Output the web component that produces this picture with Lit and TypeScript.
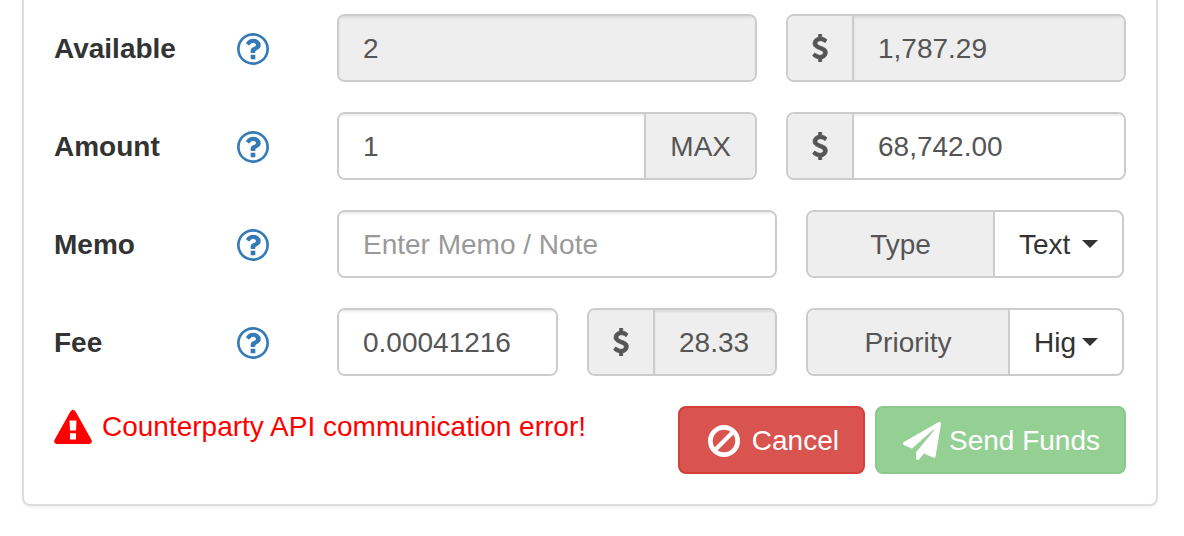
import { LitElement, html, css, svg } from "lit";
import { customElement, property } from "lit/decorators.js";

// Each glyph carries its own view box.
const ICONS: Record<string, { box: string; body: unknown }> = {
  question: {
    box: "0 0 1536 1536",
    body: svg`<path d="M880 1072v160q0 14-9 23t-23 9h-160q-14 0-23-9t-9-23v-160q0-14 9-23t23-9h160q14 0 23 9t9 23zm256-496q0 50-15 90t-45.500 69-52 44-59.500 36q-32 18-46.500 28t-26 24-11.500 29v32q0 14-9 23t-23 9h-160q-14 0-23-9t-9-23v-68q0-35 10.500-64.500t24-47.500 39-35.500 41-25.500 44.500-21q53-25 75-43t22-49q0-42-43.500-71.500t-95.500-29.500q-56 0-95 27-29 20-80 83-9 12-25 12-11 0-19-6l-108-82q-10-7-12-20t5-23q122-192 349-192 129 0 238.500 89.500t109.500 214.500zm-368-448q-130 0-248.500 51t-204 136.500-136.500 204-51 248.500 51 248.500 136.500 204 204 136.500 248.500 51 248.500-51 204-136.500 136.500-204 51-248.500-51-248.500-136.500-204-204-136.500-248.500-51zm768 640q0 209-103 385.500t-279.500 279.500-385.500 103-385.500-103-279.500-279.500-103-385.500 103-385.500 279.500-279.500 385.500-103 385.500 103 279.500 279.500 103 385.500z"/>`,
  },
  warning: {
    box: "0 0 576 512",
    body: svg`<path fill-rule="evenodd" d="M329 24l240 430c14 26-4 58-32 58H39c-28 0-46-32-32-58L247 24c18-32 64-32 82 0zM236 156l6 152h92l6-152zM242 352h92v92h-92z"/>`,
  },
  dollar: {
    box: "0 0 1024 1792",
    body: svg`<path stroke="currentColor" stroke-width="50" d="M978 1185q0 153-99.500 263.500t-258.500 136.500v175q0 14-9 23t-23 9h-135q-13 0-22.500-9.500t-9.500-22.500v-175q-66-9-127.500-31t-101.500-44.500-74-48-46.500-37.500-17.500-18q-17-21-2-41l103-135q7-10 23-12 15-2 24 9l2 2q113 99 243 125 37 8 74 8 81 0 142.500-43t61.500-122q0-28-15-53t-33.500-42-58.500-37.500-66-32-80-32.500q-39-16-61.500-25t-61.500-26.500-62.500-31-56.500-35.500-53.500-42.500-43.500-49-35.500-58-21-66.500-8.500-78q0-138 98-242t255-134v-180q0-13 9.500-22.500t22.500-9.500h135q14 0 23 9t9 23v176q57 6 110.500 23t87 33.500 63.500 37.500 39 29 15 14q17 18 5 38l-81 146q-8 15-23 16-14 3-27-7-3-3-14.500-12t-39-26.500-58.500-32-74.500-26-85.500-11.500q-95 0-155 43t-60 111q0 26 8.500 48t29.500 41.500 39.500 33 56 31 60.500 27 70 27.500q53 20 81 31.500t76 35 75.500 42.500 62 50 53 63.500 31.500 76.500 13 94z"/>`,
  },
  ban: {
    box: "0 0 512 512",
    body: svg`<circle cx="256" cy="256" r="218" fill="none" stroke="currentColor" stroke-width="76"/>
      <path d="M112 400L400 112" fill="none" stroke="currentColor" stroke-width="68"/>`,
  },
  plane: {
    box: "0 0 512 512",
    body: svg`<path d="M476 3.200L12.500 270.600c-18.100 10.400-15.800 35.600 2.200 43.200L121 358.400l287.300-253.200c5.500-4.900 13.300 2.600 8.600 8.300L176 407v80.500c0 23.600 28.500 32.900 42.500 15.800L282 426l124.600 52.200c14.200 6 30.400-2.900 33-18.200l72-432C515 7.800 493.300-6.800 476 3.200z"/>`,
  },
};

@customElement("app-icon")
class AppIcon extends LitElement {
  @property() name = "question";

  static styles = css`
    :host { display: inline-flex; }
    .glyph { display: block; width: 100%; height: 100%; fill: currentColor; }
  `;

  render() {
    const icon = ICONS[this.name];
    return html`<svg class="glyph" viewBox=${icon.box} aria-hidden="true">${icon.body}</svg>`;
  }
}

@customElement("app-root")
class AppRoot extends LitElement {
  static styles = css`
    :host {
      display: block;
      font: 28px/40px "Liberation Sans", Arial, sans-serif;
      color: #333;
      background: #fff;
    }
    * { box-sizing: border-box; }
    .page { padding: 0 26px 30px 22px; }
    .panel {
      display: grid;
      gap: 30px;
      padding: 14px 30px 30px;
      border: 2px solid #ddd;
      border-top: 0;
      border-radius: 0 0 8px 8px;
      box-shadow: 0 2px 2px rgba(0, 0, 0, 0.05);
    }
    .row { display: grid; grid-template-columns: 183px 100px minmax(0, 1fr); align-items: center; }
    .name { padding-top: 2px; font-weight: 700; }
    .help { display: flex; width: 32px; padding-top: 2px; color: #337ab7; }
    .help app-icon { width: 32px; height: 32px; }
    .fields { display: grid; gap: 29px; }
    .pair { grid-template-columns: minmax(0, 420fr) minmax(0, 340fr); }
    .memo { grid-template-columns: minmax(0, 440fr) minmax(0, 318fr); padding-right: 2px; }
    .fee { grid-template-columns: minmax(0, 221fr) minmax(0, 190fr) minmax(0, 318fr); padding-right: 2px; }
    .group {
      display: flex;
      height: 68px;
      border: 2px solid #ccc;
      border-radius: 8px;
      overflow: hidden;
      background: #fff;
    }
    .input {
      flex: 1;
      min-width: 0;
      width: 100%;
      padding: 2px 24px 0;
      border: 0;
      outline: 0;
      font: inherit;
      color: #555;
      background: #fff;
      box-shadow: inset 0 2px 2px rgba(0, 0, 0, 0.075);
    }
    .input::placeholder { color: #999; opacity: 1; }
    .input:read-only { background: #eee; }
    .addon {
      display: flex;
      flex: none;
      align-items: center;
      justify-content: center;
      padding: 2px 24px 0;
      border: 0;
      border-right: 2px solid #ccc;
      font: inherit;
      color: #555;
      background: #eee;
    }
    .currency { width: 66px; padding: 0; }
    .currency app-icon { width: 16px; height: 28px; }
    .max { border-right: 0; border-left: 2px solid #ccc; }
    .wide { flex: 1; }
    .choice { position: relative; display: flex; align-items: center; width: 127px; }
    .narrow { width: 112px; }
    .select {
      width: 100%;
      height: 100%;
      padding: 2px 46px 0 24px;
      border: 0;
      outline: 0;
      appearance: none;
      font: inherit;
      color: #333;
      background: transparent;
      text-overflow: clip;
    }
    .caret {
      position: absolute;
      right: 24px;
      top: 28px;
      border: 8px solid transparent;
      border-top-color: #333;
      border-bottom: 0;
      pointer-events: none;
    }
    .footer { display: flex; justify-content: space-between; }
    .alert { display: flex; align-items: center; gap: 10px; height: 40px; padding-top: 2px; color: #f00; }
    .alert app-icon { width: 38px; height: 34px; }
    .actions { display: flex; gap: 10px; }
    .button {
      display: flex;
      align-items: center;
      height: 68px;
      padding: 2px 24px 0 26px;
      border: 2px solid;
      border-radius: 8px;
      font: inherit;
      color: #fff;
    }
    .cancel { gap: 12px; padding-left: 28px; background: #d9534f; border-color: #d43f3a; }
    .cancel app-icon { width: 32px; height: 32px; }
    .send { gap: 8px; background: #5cb85c; border-color: #4cae4c; opacity: 0.65; }
    .send app-icon { width: 38px; height: 38px; }
  `;

  private row(id: string, label: string, kind: string, fields: unknown) {
    return html`<div class="row">
      <label class="name" for=${id}>${label}</label>
      <a class="help" href="#" aria-label="${label} help"><app-icon name="question"></app-icon></a>
      <div class="fields ${kind}">${fields}</div>
    </div>`;
  }

  private money(label: string, value: string, readonly = false) {
    return html`<div class="group">
      <span class="addon currency"><app-icon name="dollar"></app-icon></span>
      <input class="input" aria-label=${label} .value=${value} ?readonly=${readonly} />
    </div>`;
  }

  render() {
    return html`<div class="page"><form class="panel" @submit=${(e: Event) => e.preventDefault()}>
      ${this.row("available", "Available", "pair", html`
        <div class="group"><input class="input" id="available" value="2" readonly /></div>
        ${this.money("Available in dollars", "1,787.29", true)}`)}
      ${this.row("amount", "Amount", "pair", html`
        <div class="group">
          <input class="input" id="amount" value="1" />
          <button class="addon max" type="button">MAX</button>
        </div>
        ${this.money("Amount in dollars", "68,742.00")}`)}
      ${this.row("memo", "Memo", "memo", html`
        <div class="group"><input class="input" id="memo" placeholder="Enter Memo / Note" /></div>
        <div class="group">
          <label class="addon wide" for="type">Type</label>
          <span class="choice"><select class="select" id="type"><option>Text</option></select><span class="caret"></span></span>
        </div>`)}
      ${this.row("fee", "Fee", "fee", html`
        <div class="group"><input class="input" id="fee" value="0.00041216" /></div>
        ${this.money("Fee in dollars", "28.33", true)}
        <div class="group">
          <label class="addon wide" for="priority">Priority</label>
          <span class="choice narrow"><select class="select" id="priority"><option>High</option></select><span class="caret"></span></span>
        </div>`)}
      <div class="footer">
        <div class="alert" role="alert"><app-icon name="warning"></app-icon>Counterparty API communication error!</div>
        <div class="actions">
          <button class="button cancel" type="button"><app-icon name="ban"></app-icon>Cancel</button>
          <button class="button send" type="submit" disabled><app-icon name="plane"></app-icon>Send Funds</button>
        </div>
      </div>
    </form></div>`;
  }
}
